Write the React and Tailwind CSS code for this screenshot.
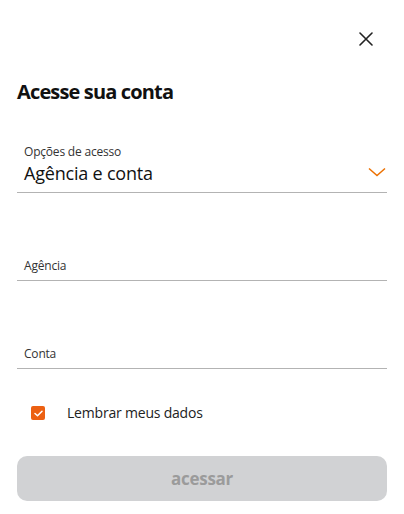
import React, { useState } from 'react';

function App() {
  const [lembrar, setLembrar] = useState(true);

  return (
    <div className="w-[404px] h-[514px] bg-white font-['Open_Sans',sans-serif] text-[#222]">
      <div className="flex justify-end pt-[31px] pr-[30px]">
        <button className="w-[16px] h-[16px] flex items-center justify-center">
          <svg width="14" height="14" viewBox="0 0 14 14" fill="none" stroke="#222" strokeWidth="1.6" strokeLinecap="round">
            <path d="M1 1L13 13M13 1L1 13" />
          </svg>
        </button>
      </div>

      <div className="px-[17px]">
        <h1 className="mt-[31px] text-[20px] font-bold tracking-[-0.85px] leading-[28px] text-[#111]">
          Acesse sua conta
        </h1>

        <div className="mt-[38px] border-b border-[#b3b3b3] pb-[6px]">
          <p className="pl-[7px] text-[12px] leading-[16px] text-[#333] tracking-[-0.2px]">Opções de acesso</p>
          <div className="flex items-center justify-between pl-[7px]">
            <span className="text-[18px] leading-[26px] text-[#111] tracking-[-0.2px]">Agência e conta</span>
            <svg width="18" height="10" viewBox="0 0 18 10" fill="none" stroke="#ec7000" strokeWidth="1.5" className="mr-[1px] -mt-[2px]">
              <path d="M1 1.5L9 8.5L17 1.5" />
            </svg>
          </div>
        </div>

        <div className="mt-[65px] border-b border-[#b3b3b3] pb-[6px]">
          <p className="pl-[7px] text-[12px] leading-[16px] text-[#333] tracking-[-0.2px]">Agência</p>
        </div>

        <div className="mt-[65px] border-b border-[#b3b3b3] pb-[6px]">
          <p className="pl-[7px] text-[12px] leading-[16px] text-[#333] tracking-[-0.2px]">Conta</p>
        </div>

        <label className="mt-[34px] flex items-center pl-[14px] cursor-pointer">
          <span
            onClick={() => setLembrar(!lembrar)}
            className="w-[14px] h-[14px] rounded-[2px] bg-[#ec6012] flex items-center justify-center"
          >
            {lembrar && (
              <svg width="9" height="7" viewBox="0 0 9 7" fill="none" stroke="#fff" strokeWidth="1.5" strokeLinecap="round" strokeLinejoin="round">
                <path d="M1 3.5L3.5 5.8L8 1.2" />
              </svg>
            )}
          </span>
          <span className="ml-[22px] text-[14px] leading-[20px] text-[#222] tracking-[-0.2px]">Lembrar meus dados</span>
        </label>

        <button
          disabled
          className="mt-[33px] w-full h-[45px] rounded-[10px] bg-[#d1d2d4] text-[17px] font-bold text-[#9b9b9b] tracking-[-0.3px]"
        >
          acessar
        </button>
      </div>
    </div>
  );
}

export default App;
